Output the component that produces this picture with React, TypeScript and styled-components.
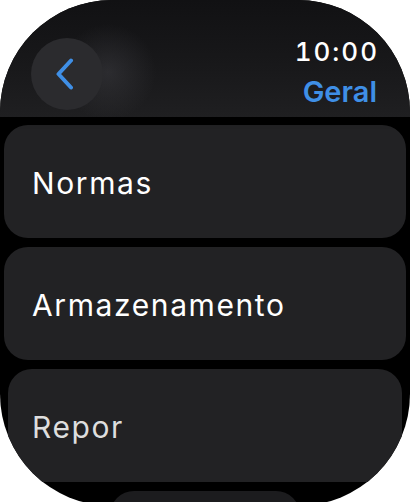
import styled, { createGlobalStyle } from "styled-components";

const GlobalStyle = createGlobalStyle`
  html, body {
    margin: 0;
    padding: 0;
    background: #ffffff;
    overflow: hidden;
  }
`;

interface Item {
  label: string;
  inset: number;
  dim?: boolean;
}

const items: Item[] = [
  { label: "Normas", inset: 4 },
  { label: "Armazenamento", inset: 4 },
  { label: "Repor", inset: 8, dim: true },
];

const BackIcon = () => (
  <svg width="20" height="32" viewBox="0 0 20 32" fill="none">
    <path d="M16 2.5 L3.5 16 L16 29.5" stroke="#3f8fe6" strokeWidth="4" strokeLinecap="round" strokeLinejoin="round" />
  </svg>
);

const App: React.FC = () => {
  return (
    <>
      <GlobalStyle />
      <Screen>
        <Header>
          <BackButton aria-label="Voltar">
            <BackIcon />
          </BackButton>
          <Titles>
            <Time>10:00</Time>
            <PageTitle>Geral</PageTitle>
          </Titles>
        </Header>
        <List>
          {items.map((item) => (
            <Card key={item.label} $inset={item.inset}>
              <CardLabel $dim={item.dim}>{item.label}</CardLabel>
            </Card>
          ))}
          <NextCard />
        </List>
      </Screen>
    </>
  );
};

const Screen = styled.div`
  width: 410px;
  height: 506px;
  border-radius: 112px;
  overflow: hidden;
  background: #000000;
  display: flex;
  flex-direction: column;
  font-family: Inter, "Noto Sans", sans-serif;
`;

const Header = styled.div`
  flex: 0 0 auto;
  height: 117px;
  box-sizing: border-box;
  padding: 38px 33px 0 31px;
  display: flex;
  justify-content: space-between;
  align-items: flex-start;
  background:
    radial-gradient(circle at 108px 72px, rgba(72, 72, 78, 0.4) 0, rgba(72, 72, 78, 0) 48px),
    linear-gradient(180deg, #111113 0%, #18181a 55%, #1f1f21 100%);
  box-shadow: 0 3px 6px rgba(0, 0, 0, 0.9);
  position: relative;
  z-index: 1;
`;

const BackButton = styled.button`
  width: 72px;
  height: 72px;
  border-radius: 50%;
  border: none;
  padding: 0 4px 0 0;
  background: #2b2b2e;
  display: flex;
  align-items: center;
  justify-content: center;
`;

const Titles = styled.div`
  display: flex;
  flex-direction: column;
  align-items: flex-end;
`;

const Time = styled.div`
  color: #ffffff;
  font-size: 26px;
  font-weight: 500;
  font-variant-numeric: tabular-nums;
  letter-spacing: 2px;
  line-height: 28px;
  margin-right: -2px;
`;

const PageTitle = styled.div`
  color: #3f8fe6;
  font-size: 29px;
  font-weight: 600;
  line-height: 34px;
  margin-top: 9px;
`;

const List = styled.div`
  display: flex;
  flex-direction: column;
  gap: 9px;
  padding-top: 8px;
`;

const Card = styled.div<{ $inset: number }>`
  height: 113px;
  margin: 0 ${({ $inset }) => $inset}px;
  padding: 0 ${({ $inset }) => 32 - $inset}px;
  border-radius: 24px;
  background: #222224;
  display: flex;
  align-items: center;
  flex-shrink: 0;
`;

const CardLabel = styled.span<{ $dim?: boolean }>`
  color: ${({ $dim }) => ($dim ? "#dedede" : "#ffffff")};
  font-size: 30px;
  font-weight: 400;
  letter-spacing: 1.6px;
  padding-top: 3px;
`;

const NextCard = styled.div`
  height: 60px;
  margin: 0 110px;
  border-radius: 24px;
  background: #1c1c1e;
  flex-shrink: 0;
`;

export default App;
